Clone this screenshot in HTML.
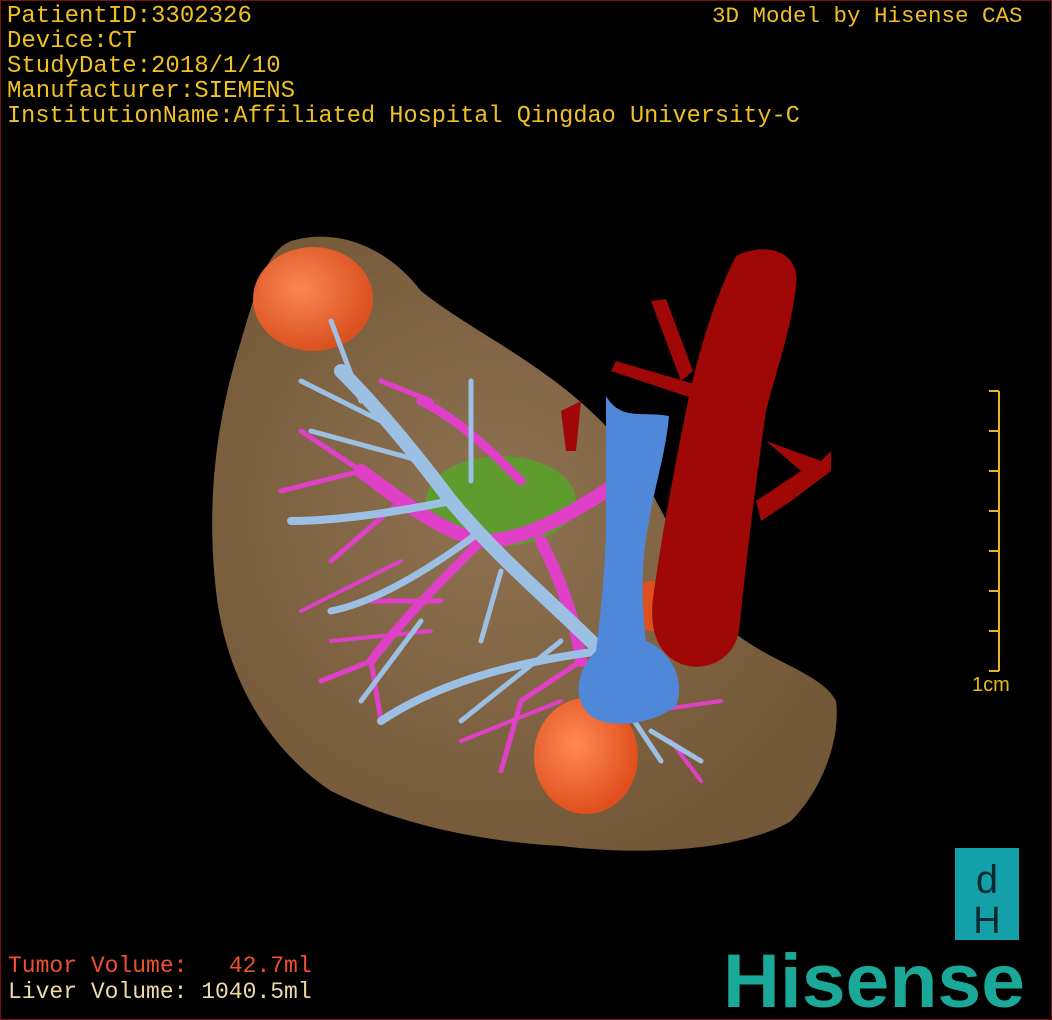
<!DOCTYPE html>
<html><head><style>
html,body{margin:0;padding:0;background:#000;}
#w{position:relative;width:1050px;height:1018px;border:1px solid #7a1010;overflow:hidden;background:#000;}
.t{position:absolute;font-family:"Liberation Mono",monospace;white-space:pre;line-height:25px;}
</style></head><body><div id="w">
<svg width="1052" height="1020" style="position:absolute;left:0;top:0">
<defs>
<radialGradient id="lg" cx="0.45" cy="0.45" r="0.6"><stop offset="0" stop-color="#8e7252"/><stop offset="1" stop-color="#735838"/></radialGradient>
<radialGradient id="tg" cx="0.4" cy="0.4" r="0.6"><stop offset="0" stop-color="#ff8a55"/><stop offset="1" stop-color="#e0501e"/></radialGradient>
</defs>
<path d="M290 240 C340 225 390 250 420 290 C470 330 540 360 600 420 C650 470 680 560 720 620 C760 660 820 670 835 700 C840 740 820 790 790 820 C740 850 640 855 560 845 C470 840 390 820 330 790 C270 750 225 680 215 590 C205 500 215 420 240 340 C255 290 265 250 290 240 Z" fill="url(#lg)"/>
<ellipse cx="312" cy="298" rx="60" ry="52" fill="url(#tg)" opacity="0.95"/>
<ellipse cx="585" cy="755" rx="52" ry="58" fill="url(#tg)"/>
<ellipse cx="650" cy="605" rx="20" ry="25" fill="#e0501e"/>
<ellipse cx="500" cy="500" rx="75" ry="45" fill="#5aa02a" opacity="0.9"/>
<g stroke="#e040c8" fill="none" stroke-linecap="round">
<path d="M620 480 C560 520 520 540 480 540 C440 530 400 500 360 470" stroke-width="14"/>
<path d="M540 540 C560 580 575 620 580 660" stroke-width="12"/>
<path d="M480 540 C440 580 400 620 370 660" stroke-width="9"/>
<path d="M420 400 C460 420 490 450 520 480" stroke-width="9"/>
<path d="M360 470 L280 490 M360 470 L300 430 M400 500 L330 560 M370 660 L320 680 M370 660 L380 720 M580 660 L520 700 M520 700 L500 770 M440 600 L370 600 M380 380 L430 400" stroke-width="5"/>
<path d="M560 700 L460 740 M650 710 L720 700 M670 740 L700 780 M400 560 L300 610 M430 630 L330 640" stroke-width="4"/>
</g>
<g stroke="#9cc0e4" fill="none" stroke-linecap="round">
<path d="M600 650 C550 600 500 560 450 500 C420 460 380 410 340 370" stroke-width="14"/>
<path d="M450 500 C400 510 340 520 290 520" stroke-width="8"/>
<path d="M480 530 C440 560 380 600 330 610" stroke-width="7"/>
<path d="M600 650 C520 660 440 680 380 720" stroke-width="8"/>
<path d="M400 430 L300 380 M420 460 L310 430 M360 400 L330 320 M470 480 L470 380 M500 570 L480 640 M420 620 L360 700 M560 640 L460 720 M620 700 L660 760 M650 730 L700 760" stroke-width="5"/>
</g>
<g fill="#a00808">
<path d="M735 255 C765 240 800 250 795 285 C790 330 775 370 765 410 C755 480 745 560 738 630 C732 662 700 672 678 662 C652 650 648 620 653 590 C663 520 675 460 685 410 C695 360 712 300 735 255 Z"/>
<path d="M680 380 L650 300 L665 298 L692 370 Z M700 400 L610 370 L615 360 L700 385 Z M765 440 L820 460 L830 450 L830 470 L790 500 L760 520 L755 500 L800 470 Z"/>
<path d="M560 410 L580 400 L575 450 L565 450 Z"/>
</g>
<path d="M605 395 C620 420 640 410 668 415 C665 450 655 480 648 520 C640 560 640 600 645 640 C670 650 685 680 675 705 C650 725 600 730 585 710 C570 690 580 665 595 650 C600 610 605 560 605 520 C605 480 605 440 605 395 Z" fill="#4f88d8"/>
<g stroke="#e8b818" stroke-width="2">
<line x1="998" y1="390" x2="998" y2="670"/>
<line x1="988" y1="390" x2="998" y2="390"/><line x1="988" y1="430" x2="998" y2="430"/>
<line x1="988" y1="470" x2="998" y2="470"/><line x1="988" y1="510" x2="998" y2="510"/>
<line x1="988" y1="550" x2="998" y2="550"/><line x1="988" y1="590" x2="998" y2="590"/>
<line x1="988" y1="630" x2="998" y2="630"/><line x1="988" y1="670" x2="998" y2="670"/>
</g>
<text x="971" y="690" fill="#e8b818" font-family="Liberation Sans" font-size="20">1cm</text>
<rect x="954" y="847" width="64" height="92" fill="#13a0a8"/>
<text x="986" y="892" fill="#0a2a30" font-family="Liberation Sans" font-size="40" text-anchor="middle">d</text>
<text x="986" y="932" fill="#0a2a30" font-family="Liberation Sans" font-size="38" text-anchor="middle">H</text>
<text x="722" y="1006" fill="#1aa898" font-family="Liberation Sans" font-weight="bold" font-size="76" textLength="302" lengthAdjust="spacingAndGlyphs">Hisense</text>
</svg>
<div class="t" style="left:6px;top:3px;color:#f0c020;font-size:24px">PatientID:3302326
Device:CT
StudyDate:2018/1/10
Manufacturer:SIEMENS</div>
<div class="t" style="left:6px;top:103px;color:#f0c020;font-size:23.6px">InstitutionName:Affiliated Hospital Qingdao University-C</div>
<div class="t" style="left:711px;top:3px;color:#f0c020;font-size:22.5px">3D Model by Hisense CAS</div>
<div class="t" style="left:7px;top:952px;color:#f05030;font-size:23px;line-height:26px">Tumor Volume:   42.7ml</div>
<div class="t" style="left:7px;top:978px;color:#f0d8a8;font-size:23px;line-height:26px">Liver Volume: 1040.5ml</div>
</div></body></html>
